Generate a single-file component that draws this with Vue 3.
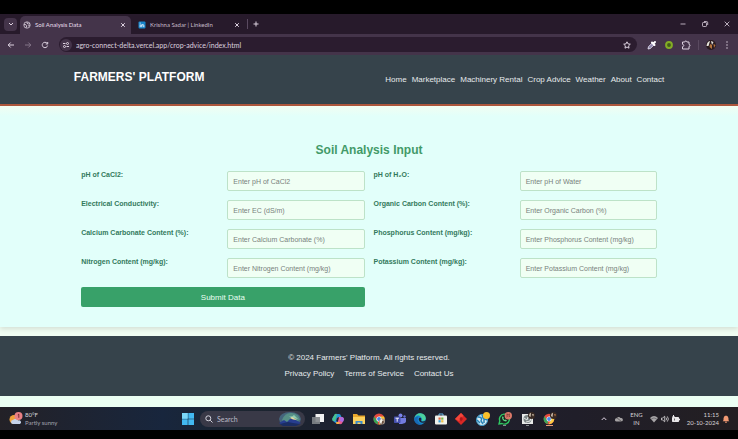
<script setup>
import { ref } from 'vue'

const url = ref('agro-connect-delta.vercel.app/crop-advice/index.html')
const query = ref('')
const navLinks = ['Home', 'Marketplace', 'Machinery Rental', 'Crop Advice', 'Weather', 'About', 'Contact']
const footerLinks = ['Privacy Policy', 'Terms of Service', 'Contact Us']
const fields = ref([
  { id: 'ph-cacl2', label: 'pH of CaCl2:', hint: 'Enter pH of CaCl2', value: '' },
  { id: 'ph-water', label: 'pH of H₂O:', hint: 'Enter pH of Water', value: '' },
  { id: 'ec', label: 'Electrical Conductivity:', hint: 'Enter EC (dS/m)', value: '' },
  { id: 'oc', label: 'Organic Carbon Content (%):', hint: 'Enter Organic Carbon (%)', value: '' },
  { id: 'caco3', label: 'Calcium Carbonate Content (%):', hint: 'Enter Calcium Carbonate (%)', value: '' },
  { id: 'p', label: 'Phosphorus Content (mg/kg):', hint: 'Enter Phosphorus Content (mg/kg)', value: '' },
  { id: 'n', label: 'Nitrogen Content (mg/kg):', hint: 'Enter Nitrogen Content (mg/kg)', value: '' },
  { id: 'k', label: 'Potassium Content (mg/kg):', hint: 'Enter Potassium Content (mg/kg)', value: '' },
])
</script>

<template>
  <div class="screen">
    <div class="tabs">
      <button class="tab-menu" aria-label="Search tabs">
        <svg class="glyph" viewBox="0 0 8 8"><path d="M2 3l2 2 2-2" /></svg>
      </button>
      <div class="tab active">
        <svg class="favicon" viewBox="0 0 8 8">
          <circle cx="4" cy="4" r="3.2" fill="none" stroke="#d6ccd9" stroke-width=".8" />
          <path d="M1 3.5l2 .3.8 1-.8 2M4 1v1.4l1.5.6L7 2.6M5 5l1.800-.5" fill="none" stroke="#d6ccd9" stroke-width=".9" />
        </svg>
        <span class="tab-title">Soil Analysis Data</span>
        <button class="plain" aria-label="Close tab">
          <svg class="glyph" viewBox="0 0 8 8"><path d="M2.200 2.200l3.600 3.600M5.800 2.200l-3.600 3.600" /></svg>
        </button>
      </div>
      <div class="tab">
        <svg class="favicon" viewBox="0 0 8 8">
          <rect x=".5" y=".5" width="7" height="7" rx="1" fill="#1683c9" />
          <path d="M2.200 3.400v2.800M2.200 1.700v.9M3.800 6.200V3.400M3.800 4.500c.2-1.200 2-1.300 2 .1v1.600" stroke="#fff" stroke-width=".9" fill="none" />
        </svg>
        <span class="tab-title">Krishna Sadar | LinkedIn</span>
        <button class="plain" aria-label="Close tab">
          <svg class="glyph" viewBox="0 0 8 8"><path d="M2.200 2.200l3.600 3.600M5.800 2.200l-3.600 3.600" /></svg>
        </button>
      </div>
      <span class="rule"></span>
      <button class="plain new-tab" aria-label="New tab">
        <svg class="glyph" viewBox="0 0 8 8"><path d="M4 1.500v5M1.500 4h5" /></svg>
      </button>
      <div class="window-buttons">
        <button class="plain" aria-label="Minimize"><svg class="glyph thin" viewBox="0 0 8 8"><path d="M1.500 4h5" /></svg></button>
        <button class="plain" aria-label="Restore">
          <svg class="glyph thin" viewBox="0 0 8 8"><rect x="1.500" y="2.500" width="4" height="4" rx=".8" /><path d="M3 1.500h2.500q1.200 0 1.200 1.200V5" /></svg>
        </button>
        <button class="plain" aria-label="Close"><svg class="glyph thin" viewBox="0 0 8 8"><path d="M1.700 1.700l4.600 4.600M6.300 1.700L1.700 6.300" /></svg></button>
      </div>
    </div>

    <div class="toolbar">
      <div class="history">
        <button class="plain" aria-label="Back"><svg class="glyph" viewBox="0 0 8 8"><path d="M7 4H1.200M3.700 1.500L1.200 4l2.500 2.500" /></svg></button>
        <button class="plain" aria-label="Forward"><svg class="glyph faint" viewBox="0 0 8 8"><path d="M1 4h5.800M4.300 1.500L6.800 4 4.300 6.500" /></svg></button>
        <button class="plain" aria-label="Reload"><svg class="glyph" viewBox="0 0 8 8"><path d="M6.600 4.600A2.700 2.700 0 1 1 6 2.200M6.700 1v2H4.700" /></svg></button>
      </div>
      <div class="address">
        <button class="site-info" aria-label="Site information">
          <svg class="glyph" viewBox="0 0 8 8"><path d="M1 2.500h2.500M4.500 5.500H7" /><circle cx="5.500" cy="2.500" r="1" /><circle cx="2.500" cy="5.500" r="1" /></svg>
        </button>
        <input v-model="url" class="url" aria-label="Address" />
        <button class="plain" aria-label="Bookmark">
          <svg class="glyph" viewBox="0 0 8 8"><path d="M4 .8l1 2.100 2.300.3-1.700 1.600.4 2.400-2-1.200-2 1.200.4-2.400L.7 3.200 3 2.900z" /></svg>
        </button>
      </div>
      <div class="extensions">
        <svg class="ext" viewBox="0 0 10 10"><path d="M1 9l.5-2.300 4-4 1.900 1.800-4.100 4z" fill="#8e86ac" stroke="#eeeafa" stroke-width=".8" /><path d="M5 2.500l2.500 2.500M6.500 3.500L8 2" stroke="#fff" stroke-width="2" stroke-linecap="round" /></svg>
        <svg class="ext" viewBox="0 0 10 10"><circle cx="5" cy="5" r="2.900" fill="#435d18" stroke="#83ad25" stroke-width="2" /></svg>
        <svg class="ext" viewBox="0 0 10 10"><path d="M1.500 2h2.200q.1-1 1.100-1t1.100 1H8v2.400q1 .1 1 1t-1 1V9H1.500V6.700q1.300-.2 1.300-1.200T1.500 4.300z" fill="none" stroke="#ddd2e0" stroke-width="1" /></svg>
        <span class="rule"></span>
        <svg class="ext" viewBox="0 0 10 10"><circle cx="5" cy="5" r="5" fill="#2a1b20" /><path d="M.5 6Q1 1.500 4 1L2.500 6zM5 1l2.500 1L6 5z" fill="#e6e4dc" /><path d="M4 4l2 1v4L3.500 7zM7.500 4L9.500 5 8 8z" fill="#b4733c" /></svg>
        <button class="plain" aria-label="Menu"><svg class="dots" viewBox="0 0 8 8"><circle cx="4" cy="1" r=".8" /><circle cx="4" cy="4" r=".8" /><circle cx="4" cy="7" r=".8" /></svg></button>
      </div>
    </div>

    <header class="site-header">
      <div class="header-inner">
        <h1>FARMERS' PLATFORM</h1>
        <nav><a v-for="item in navLinks" :key="item" href="#">{{ item }}</a></nav>
      </div>
    </header>

    <main>
      <form @submit.prevent>
        <h2>Soil Analysis Input</h2>
        <div class="grid">
          <template v-for="field in fields" :key="field.id">
            <label :for="field.id">{{ field.label }}</label>
            <input :id="field.id" v-model="field.value" type="text" :placeholder="field.hint" />
          </template>
          <button class="submit" type="submit">Submit Data</button>
        </div>
      </form>
    </main>

    <footer>
      <p>© 2024 Farmers' Platform. All rights reserved.</p>
      <div class="footer-links"><a v-for="item in footerLinks" :key="item" href="#">{{ item }}</a></div>
    </footer>

    <div class="taskbar">
      <div class="weather">
        <svg class="weather-icon" viewBox="0 0 14 14">
          <circle cx="5" cy="7.500" r="4.500" fill="#eda13a" />
          <path d="M4 12a2 2 0 0 1 0-4 3 3 0 0 1 5 .5 2 2 0 0 1 2 3.500z" fill="#c6d4ea" />
          <circle cx="9.500" cy="4" r="4" fill="#e98084" />
          <path d="M8.800 2.800l1-.6v3.600" fill="none" stroke="#6b2029" stroke-width=".9" />
        </svg>
        <div><div class="temp">80°F</div><div class="sky">Partly sunny</div></div>
      </div>

      <div class="apps">
        <svg class="app" viewBox="0 0 12 12"><path d="M0 0h5.700v5.700H0zM6.300 0H12v5.700H6.300zM0 6.300h5.700V12H0zM6.300 6.300H12V12H6.300z" fill="#42b9f0" /><path d="M0 0h5.700v5.700H0z" fill="#7bd8f8" /></svg>
        <div class="search">
          <svg class="search-icon" viewBox="0 0 8 8"><circle cx="3.300" cy="3.300" r="2.500" /><path d="M5.200 5.200L7.500 7.500" /></svg>
          <input v-model="query" type="text" placeholder="Search" aria-label="Search" />
          <svg class="scene" viewBox="0 0 25 14">
            <ellipse cx="12" cy="7" rx="11" ry="7" fill="#44657c" />
            <path d="M4 8Q7 0 14 1t8 7l-5 2H6z" fill="#568f86" />
            <path d="M8 3q5 3 8 0l4 4-6-1z" fill="#91ccb4" />
            <path d="M1 11l5-3 3 2 4-4 3 1 7 4-4 2H4z" fill="#273d8f" />
            <path d="M12 6l2-1 5 3-4-.5z" fill="#e8d99b" /><path d="M2 12l8-2 5 1 7 1-4 2H5z" fill="#1b2d62" />
          </svg>
        </div>
        <svg class="app" viewBox="0 0 12 12"><rect x="3.500" y="1" width="8.500" height="8" fill="#f1f2f2" /><rect y="4" width="8" height="7" fill="#81858a" opacity=".9" /></svg>
        <svg class="app" viewBox="0 0 12 12">
          <path d="M3 1h4q1.500 0 2 2l.5 1H7L5 9Q4.500 11 3 9.500L1 8Q-.5 6 .7 4.500z" fill="#2b95d6" />
          <path d="M1 4.500L3 1q1-.5 2 0L4 5 3 8H1Q-.3 6.500 1 4.500z" fill="#4ac18c" />
          <path d="M6.500 4H10q2.500.5 1.700 3L10 10.500Q9 11.500 7 11H4q1.500-.5 2-3z" fill="#e65c92" />
          <path d="M10 4q2.500.5 1.700 3l-.7 2-3-1 .5-4z" fill="#a86ce5" /><path d="M4 9h4l-1 2H4.500z" fill="#f7ae47" /><path d="M5 5l2-1-1 4-2 .5z" fill="#202434" />
        </svg>
        <svg class="app" viewBox="0 0 12 12"><path d="M0 1h4l1.500 1.500H12V11H0z" fill="#e9a72c" /><path d="M0 4h12v7H0z" fill="#fbd05d" /><path d="M2.500 11V8h7v3h-2V9.500h-3V11z" fill="#3989ca" /></svg>
        <svg class="app" viewBox="0 0 12 12">
          <circle cx="6" cy="6" r="5.500" fill="#e24a3e" /><path d="M1.200 3.400L5 9l-.3 2.400A5.500 5.500 0 0 1 1.200 3.400z" fill="#35a455" /><path d="M6 3.500h5a5.500 5.500 0 0 1-5.500 8L8 7z" fill="#f6c637" /><circle cx="6" cy="6" r="2.600" fill="#fff" /><circle cx="6" cy="6" r="1.900" fill="#4086ec" />
          <circle cx="9" cy="8.500" r="3" fill="#a99a8f" /><path d="M7 10Q6.500 6 9 6l1 3z" fill="#f3f1e7" /><path d="M9 8l2 .5-1.500 3z" fill="#563726" />
        </svg>
        <svg class="app" viewBox="0 0 12 12"><circle cx="6.500" cy="2.500" r="2" fill="#7b83eb" /><circle cx="10.500" cy="3.500" r="1.200" fill="#646cd0" /><path d="M5 5h7v3.500q-.5 2-2.500 2L8 11H5z" fill="#727bdf" /><rect y="3.500" width="6.500" height="6.500" rx=".7" fill="#4650ae" /><path d="M1.500 5.200H5M3.200 5.200v3.500" stroke="#fff" stroke-width=".9" /></svg>
        <svg class="app" viewBox="0 0 12 12"><circle cx="6" cy="6" r="5.800" fill="#168bd0" /><path d="M.3 5Q2 0 6.500.2q5 .3 5.300 5.300-.3 2.500-4 2.500 1-2.500-.8-3.700Q4-.2.3 5z" fill="#4bd09c" /><path d="M.2 6q1-3 4.500-2.500Q2.500 6 4.500 9T10 10.300Q5 13.500 1.500 9.500.2 8 .2 6z" fill="#1869b7" /><path d="M5 5q2-.8 2.300 1-.8 2 .5 2.400 2 .5 4-.8L10.500 9.500q-3 1-4.700-.8T5 5z" fill="#1d2433" /></svg>
        <svg class="app" viewBox="0 0 12 12"><path d="M4 3V1h4v2" fill="none" stroke="#69b7e8" stroke-width="1" /><rect y="2.500" width="12" height="9" rx="1" fill="#f0f1ec" /><path d="M3.500 4.500h2.200v2.200H3.500z" fill="#e36443" /><path d="M6.200 4.500h2.200v2.200H6.200z" fill="#7db646" /><path d="M3.500 7.200h2.200v2.200H3.500z" fill="#3b9fd8" /><path d="M6.200 7.200h2.200v2.200H6.200z" fill="#efbd42" /></svg>
        <svg class="app" viewBox="0 0 12 12"><path d="M6 0l6 6-6 6-6-6z" fill="#d92825" /><path d="M6 0l2.500 2.500L4 8 0 6z" fill="#f4463a" /><path d="M6 3.500l2 2.500-2 2.500L4.500 6z" fill="#ab171b" /></svg>
        <svg class="app wide" viewBox="0 0 14 14"><circle cx="6" cy="8" r="5.500" fill="#d8edf6" stroke="#3b9aca" stroke-width="1" /><path d="M2 5q5 0 3 4l2 3M6 3l1 3 4 2M1 8l3 3M8 7v4" fill="none" stroke="#2783b7" stroke-width="1.500" /><circle cx="10.500" cy="3.500" r="3.500" fill="#fac12b" /></svg>
        <svg class="app wide" viewBox="0 0 14 14"><path d="M1 12l.8-3A5 5 0 1 1 4 11.500z" fill="#18251f" stroke="#2fc762" stroke-width="1.400" /><path d="M4 5q0 4 4 4.500l1-1-1.500-1-1 .5L5.300 6.500 5.800 5.700 5 4.300z" fill="#60d788" /><circle cx="10.300" cy="3.700" r="3.700" fill="#dc7969" /><path d="M8.300 2.200h1.500L9 3.400q1.500 1-.7 1.600M12 2.200h-1.200v1.200q2 .3 0 1.700" fill="none" stroke="#69302c" stroke-width=".7" /><path d="M5 13.600h3" stroke="#aeb4b4" stroke-width=".8" /></svg>
        <svg class="app wide" viewBox="0 0 14 14"><path d="M1 2h11v10H1z" fill="#e7e9e8" /><circle cx="6.500" cy="7" r="4" fill="#7d8586" /><path d="M3 6l3 2 1-3 3 1-1 3-4 1" fill="none" stroke="#e4e7e6" stroke-width="1" /><circle cx="10.500" cy="3.500" r="3.500" fill="#372923" /><path d="M8 4Q8 1 10 .7L9.500 5zM11 2l2 .5-1 2z" fill="#d8cab8" /><path d="M5 13.600h3" stroke="#aeb4b4" stroke-width=".8" /></svg>
        <svg class="app wide" viewBox="0 0 14 14"><circle cx="6" cy="7" r="5.300" fill="#e34a3d" /><path d="M1.400 4.300L5 10l-.5 2.100A5.300 5.300 0 0 1 1.400 4.300z" fill="#38a858" /><path d="M6 4.400h4.700A5.300 5.300 0 0 1 5.500 12.200L8 8z" fill="#f8cc41" /><circle cx="6" cy="7" r="2.500" fill="#fff" /><circle cx="6" cy="7" r="1.900" fill="#488cec" /><circle cx="10.500" cy="3.500" r="3.500" fill="#372923" /><path d="M8 4Q8 1 10 .7L9.500 5z" fill="#d8cab8" /><path d="M11 2l2 .5-1 2z" fill="#bd7b4d" /><path d="M3 13.500h7" stroke="#e99a76" stroke-width="1" /></svg>
      </div>

      <div class="tray">
        <svg class="glyph" viewBox="0 0 8 8"><path d="M1.700 5L4 2.700 6.300 5" /></svg>
        <svg class="cloud" viewBox="0 0 8 8"><path d="M1.500 6.500A1.600 1.600 0 0 1 1.600 3.300 2.200 2.200 0 0 1 5.500 3 1.800 1.800 0 0 1 6.500 6.500z" fill="#a5a2a3" /><path d="M1 2l6 5" stroke="#343035" stroke-width=".6" /></svg>
        <div class="lang"><div>ENG</div><div>IN</div></div>
        <div class="status">
          <svg viewBox="0 0 8 8"><path d="M0 3Q4-.8 8 3L4 7.500z" fill="#a8a6a8" /><path d="M1.200 4Q4 1.800 6.800 4" fill="none" stroke="#454246" stroke-width=".5" /></svg>
          <svg viewBox="0 0 8 8"><path d="M.5 3h1.200l2-1.800v5.600l-2-1.800H.5zM5 2.600q1.200 1.400 0 2.800M6.300 1.400q2.200 2.600 0 5.200" fill="none" stroke="#d8d6d8" stroke-width=".8" /></svg>
          <svg viewBox="0 0 8 8"><rect x="0" y="2" width="7" height="5" rx=".7" fill="#e8e6e8" /><path d="M7.500 3.700v1.600M1.500 0v3M.5 1.500h2" stroke="#e8e6e8" stroke-width="1" /><path d="M2.500 3.500v2" stroke="#343035" stroke-width=".7" /></svg>
        </div>
        <div class="clock"><div>11:15</div><div>20-10-2024</div></div>
        <svg class="bell" viewBox="0 0 8 8"><path d="M4 .5Q6.500.8 6.500 3.500v1.700l.8 1H.7l.8-1V3.500Q1.500.8 4 .5zM3 6.700h2Q4.800 8 4 8T3 6.700z" fill="#f29a73" /></svg>
      </div>
    </div>
  </div>
</template>

<style>
body { background: #000; }
</style>

<style scoped>
.screen { padding: 14px 0 10px; background: #000; font-family: "Liberation Sans", Arial, sans-serif; color: #e6eaec; }
.screen * { box-sizing: border-box; }
button, input { font: inherit; color: inherit; margin: 0; }
a { color: inherit; text-decoration: none; }
svg { display: block; flex: none; }
.plain { display: flex; padding: 0; border: 0; background: none; }
.glyph { width: 8px; height: 8px; fill: none; stroke: #ddd2e0; stroke-width: 1; }
.thin { stroke-width: 0.8; }
.faint { stroke: #837488; }
.rule { width: 1px; height: 10px; background: #5a4a60; }

.tabs, .toolbar { font-family: Lato, "Noto Sans", sans-serif; }
.tabs { display: flex; align-items: center; height: 20px; padding-left: 4px; background: #271a2b; }
.tab-menu { display: flex; align-items: center; justify-content: center; width: 13px; height: 13px; padding: 0; border: 0; border-radius: 4px; background: #44344a; margin-right: 3px; }
.tab { display: flex; align-items: center; align-self: flex-end; width: 114px; height: 18px; padding: 0 4px 0 7px; border-radius: 5px 5px 0 0; font-size: 6px; color: #c6bac9; }
.tab.active { width: 111px; padding-left: 3px; background: #44344a; color: #e8dfea; }
.favicon { width: 8px; height: 8px; margin-right: 4px; }
.tab-title { flex: 1; line-height: 12px; white-space: nowrap; }
.tabs .rule { margin: 0 4px 0 2px; }
.window-buttons { display: flex; gap: 14px; margin-left: auto; padding-right: 7px; }

.toolbar { display: flex; align-items: center; gap: 10px; height: 21px; padding: 0 7px; background: #44344a; }
.history { display: flex; gap: 9px; }
.address { display: flex; align-items: center; flex: 1; min-width: 0; height: 15px; padding: 0 6px 0 1px; border-radius: 8px; background: #2b1c2f; }
.site-info { display: flex; align-items: center; justify-content: center; width: 12px; height: 12px; padding: 0; border: 0; border-radius: 50%; background: #44344a; }
.url { flex: 1; min-width: 0; height: 12px; padding: 0 4px; border: 0; outline: 0; background: none; font-size: 7px; line-height: 12px; color: #dcd1df; }
.extensions { display: flex; align-items: center; gap: 7px; }
.ext { width: 10px; height: 10px; }
.dots { width: 8px; height: 8px; fill: #c9bdcc; }

.site-header { height: 51px; background: #36434b; border-bottom: 2px solid #b0573d; }
.header-inner { display: flex; justify-content: space-between; width: 80%; margin: 0 auto; padding-top: 14px; }
h1 { margin: 0; font-size: 12px; line-height: 16px; color: #fff; white-space: nowrap; }
nav { display: flex; gap: 5px; padding-top: 5px; font-size: 8px; line-height: 12px; white-space: nowrap; }

main { padding: 0 0 9px; background: #f0fdf2; }
form { padding: 36px 11% 20px; background: linear-gradient(#f2fdf2, #e2fffa 10px); box-shadow: 0 2px 5px rgba(0, 0, 0, 0.12); }
h2 { margin: 0 0 12px; font-size: 12px; line-height: 17px; text-align: center; color: #429a68; }
.grid { display: grid; grid-template-columns: repeat(4, 1fr); gap: 9px; }
label { font-size: 7px; line-height: 8px; font-weight: bold; color: #337a5c; white-space: nowrap; }
.grid input { width: 100%; min-width: 0; height: 20px; padding: 0 5px; border: 1px solid #bde2c8; border-radius: 2px; background: #f0fff4; font-size: 7px; line-height: 16px; color: #2d3748; }
.grid input::placeholder { color: #78827c; opacity: 1; line-height: 16px; overflow: visible; }
.submit { grid-column: span 2; height: 20px; padding: 0; border: 0; border-radius: 2px; background: #38a169; font-size: 8px; color: #e8fff2; }

footer { height: 60px; padding-top: 16px; background: #36434b; font-size: 8px; line-height: 12px; text-align: center; }
footer p { margin: 0 0 4px; }
.footer-links { display: flex; justify-content: center; gap: 10px; }

.taskbar { display: grid; grid-template-columns: 1fr 376px 1fr; align-items: center; height: 34px; padding: 0 8px 0 9px; border-top: 11px solid #ebfff3; background: linear-gradient(90deg, #232127, #18263d 22%, #1b2530 32%, #1e2130 50%, #201e29 78%, #231f22); font-family: Lato, "Noto Sans", sans-serif; }
.weather { display: flex; align-items: center; gap: 2px; font-size: 6px; line-height: 8px; color: #d7d7dc; white-space: nowrap; }
.sky { color: #a4a4ad; }
.weather-icon { width: 14px; height: 14px; }
.apps { display: flex; align-items: center; justify-content: space-between; }
.app { width: 12px; height: 12px; }
.wide { width: 14px; height: 14px; }
.search { display: flex; align-items: center; width: 105px; height: 16px; margin: 0 -2px; padding: 0 2px 0 5px; border-radius: 8px; background: #393947; }
.search input { flex: 1; min-width: 0; height: 12px; padding: 0 4px; border: 0; outline: 0; background: none; font-size: 7px; }
.search input::placeholder { color: #bcbcc8; opacity: 1; }
.search-icon { width: 8px; height: 8px; fill: none; stroke: #d5d5de; stroke-width: 1; }
.scene { width: 25px; height: 14px; }
.tray { display: flex; align-items: center; justify-content: flex-end; gap: 7px; font-size: 6px; line-height: 8px; color: #d7d3d7; white-space: nowrap; }
.cloud { width: 8px; height: 8px; }
.lang { text-align: center; }
.status { display: flex; gap: 3px; }
.status svg { width: 8px; height: 8px; }
.clock { text-align: right; }
.bell { width: 8px; height: 8px; margin-left: -4px; }
</style>
